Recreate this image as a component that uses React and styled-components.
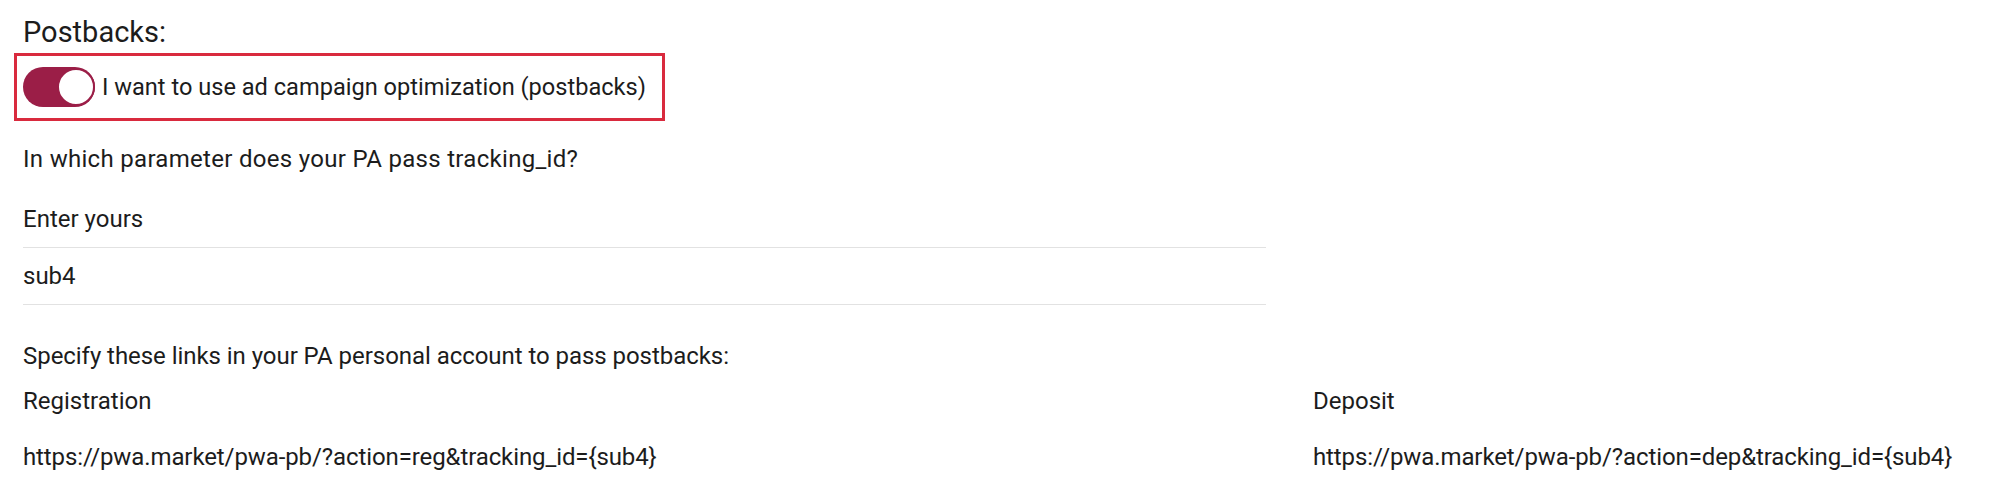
import React from "react";
import styled, { createGlobalStyle } from "styled-components";

const GlobalStyle = createGlobalStyle`
  html, body {
    margin: 0;
    padding: 0;
    background: #ffffff;
  }
  body {
    font-family: Roboto, "Liberation Sans", Arial, sans-serif;
    color: #1c1c1c;
  }
`;

const links = [
  { label: "Registration", url: "https://pwa.market/pwa-pb/?action=reg&tracking_id={sub4}" },
  { label: "Deposit", url: "https://pwa.market/pwa-pb/?action=dep&tracking_id={sub4}" }
];

const Page = styled.div`
  padding: 14px 0 0 23px;
  overflow: hidden;
`;

const Title = styled.div`
  font-size: 29px;
  line-height: 36px;
`;

const Highlight = styled.label`
  display: flex;
  align-items: center;
  gap: 7px;
  width: fit-content;
  margin: 3px 0 0 -9px;
  padding: 11px 16px 11px 6px;
  border: 3px solid #d92a3e;
  font-size: 23.6px;
  line-height: 28px;
  cursor: pointer;
`;

const Track = styled.span`
  position: relative;
  flex: none;
  width: 72px;
  height: 40px;
  border-radius: 20px;
  background: ${(p) => (p.$on ? "#9b1e47" : "#c9c9c9")};
`;

const Knob = styled.span`
  position: absolute;
  top: 1px;
  ${(p) => (p.$on ? "right: 0;" : "left: 0;")}
  width: 38px;
  height: 38px;
  box-sizing: border-box;
  border-radius: 50%;
  background: #ffffff;
  border: 2px solid #9b1e47;
`;

const Text = styled.div`
  font-size: 24px;
  line-height: 28px;
  letter-spacing: ${(p) => p.$ls || 0}px;
  margin-top: ${(p) => p.$top || 0}px;
`;

const Field = styled.div`
  width: 1243px;
  margin-top: 18px;
`;

const Row = styled.div`
  display: flex;
  align-items: center;
  height: ${(p) => p.$h || 56}px;
  font-size: 24px;
  letter-spacing: ${(p) => (p.$url ? "-0.1px" : "0")};
  white-space: nowrap;
  border-bottom: ${(p) => (p.$line ? "1px solid #e2e2e2" : "none")};
`;

const Columns = styled.div`
  display: grid;
  grid-template-columns: 1243px 1fr;
  column-gap: 47px;
  margin-top: 3px;
`;

const Column = styled.div`
  display: flex;
  flex-direction: column;
`;

function Toggle({ on }) {
  return (
    <Track $on={on}>
      <Knob $on={on} />
    </Track>
  );
}

export default function App() {
  return (
    <Page>
      <GlobalStyle />
      <Title>Postbacks:</Title>
      <Highlight>
        <Toggle on />
        I want to use ad campaign optimization (postbacks)
      </Highlight>
      <Text $top={24} $ls={0.3}>In which parameter does your PA pass tracking_id?</Text>
      <Field>
        <Row $line>Enter yours</Row>
        <Row $line>sub4</Row>
      </Field>
      <Text $top={37} $ls={-0.05}>Specify these links in your PA personal account to pass postbacks:</Text>
      <Columns>
        {links.map((l) => (
          <Column key={l.label}>
            <Row $h={55}>{l.label}</Row>
            <Row $h={57} $url $line>{l.url}</Row>
          </Column>
        ))}
      </Columns>
    </Page>
  );
}
